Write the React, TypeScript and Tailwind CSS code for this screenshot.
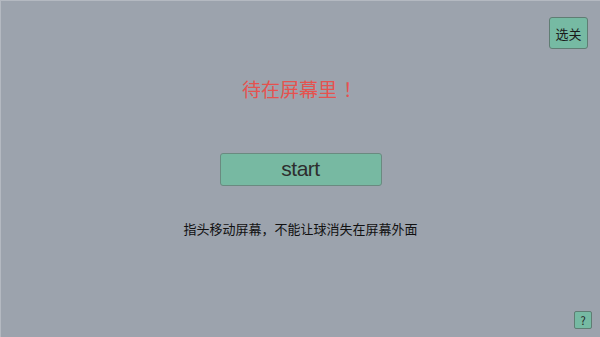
import React from 'react';

const cjk = '"Noto Sans CJK SC", "Noto Sans", sans-serif';

export default function App() {
  return (
    <div
      className="w-[600px] h-[337px] bg-[#9ca3ad] border-t border-l border-[#b4b9c1] flex flex-col items-center relative"
      style={{ fontFamily: cjk }}
    >
      <div className="w-full flex justify-end pt-[16px] pr-[12px]">
        <button className="w-[39px] h-[32px] bg-[#76baa3] border border-[#5f7d73] rounded-[3px] text-[13px] text-[#1a1a1a] leading-none">
          选关
        </button>
      </div>
      <h1 className="mt-[26px] text-[19px] leading-[28px] text-[#e5524f] ml-[3px]">
        待在屏幕里<span className="ml-[6px]">！</span>
      </h1>
      <button className="mt-[50px] w-[162px] h-[33px] pb-[3px] bg-[#77b9a2] border border-[#6a8a80] rounded-[3px] text-[21px] leading-none text-[#2e2e2e] tracking-[-0.5px]" style={{ fontFamily: '"Liberation Sans", Arial, sans-serif' }}>
        start
      </button>
      <p className="mt-[34px] text-[13px] leading-[18px] text-[#111]">指头移动屏幕，不能让球消失在屏幕外面</p>
      <button className="absolute right-[8px] bottom-[8px] w-[18px] h-[18px] bg-[#76baa3] border border-[#5f7d73] rounded-[2px] text-[11px] leading-none text-[#222]">
        ?
      </button>
    </div>
  );
}
